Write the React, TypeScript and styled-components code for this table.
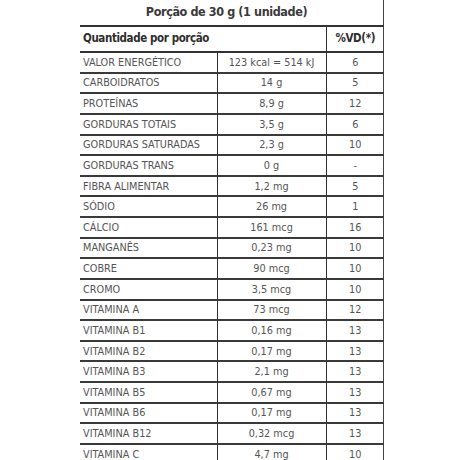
import styled, { createGlobalStyle } from "styled-components";

const Global = createGlobalStyle`
  html, body {
    margin: 0;
    padding: 0;
    background: #fff;
  }
  body {
    font-family: "DejaVu Sans Condensed", "DejaVu Sans", sans-serif;
    font-stretch: condensed;
  }
`;

const rows: [string, string, string][] = [
  ["VALOR ENERGÉTICO", "123 kcal = 514 kJ", "6"],
  ["CARBOIDRATOS", "14 g", "5"],
  ["PROTEÍNAS", "8,9 g", "12"],
  ["GORDURAS TOTAIS", "3,5 g", "6"],
  ["GORDURAS SATURADAS", "2,3 g", "10"],
  ["GORDURAS TRANS", "0 g", "-"],
  ["FIBRA ALIMENTAR", "1,2 mg", "5"],
  ["SÓDIO", "26 mg", "1"],
  ["CÁLCIO", "161 mcg", "16"],
  ["MANGANÊS", "0,23 mg", "10"],
  ["COBRE", "90 mcg", "10"],
  ["CROMO", "3,5 mcg", "10"],
  ["VITAMINA A", "73 mcg", "12"],
  ["VITAMINA B1", "0,16 mg", "13"],
  ["VITAMINA B2", "0,17 mg", "13"],
  ["VITAMINA B3", "2,1 mg", "13"],
  ["VITAMINA B5", "0,67 mg", "13"],
  ["VITAMINA B6", "0,17 mg", "13"],
  ["VITAMINA B12", "0,32 mcg", "13"],
  ["VITAMINA C", "4,7 mg", "10"],
];

export default function App() {
  return (
    <>
      <Global />
      <Page>
        <Panel>
          <Title>Porção de 30 g (1 unidade)</Title>
          <Table>
            <colgroup>
              <col style={{ width: 137 }} />
              <col style={{ width: 109 }} />
              <col style={{ width: 58 }} />
            </colgroup>
            <thead>
              <HeadRow>
                <HeadCell colSpan={2}>Quantidade por porção</HeadCell>
                <HeadCell $center>%VD(*)</HeadCell>
              </HeadRow>
            </thead>
            <tbody>
              {rows.map(([name, amount, vd]) => (
                <Row key={name}>
                  <Cell>{name}</Cell>
                  <Cell $center>{amount}</Cell>
                  <Cell $center>{vd}</Cell>
                </Row>
              ))}
            </tbody>
          </Table>
        </Panel>
      </Page>
    </>
  );
}

const Page = styled.div`
  width: 460px;
  height: 460px;
  overflow: hidden;
  padding-left: 80px;
  box-sizing: border-box;
`;

const Panel = styled.div`
  width: 304px;
  border-right: 1.5px solid #444;
  box-sizing: border-box;
`;

const Title = styled.div`
  height: 25px;
  line-height: 24px;
  text-align: center;
  font-size: 12.5px;
  font-weight: 700;
  letter-spacing: -0.4px;
  color: #3a3a3a;
  padding-right: 10px;
`;

const Table = styled.table`
  width: 304px;
  border-collapse: collapse;
  table-layout: fixed;
  border-top: 2px solid #333;
`;

const HeadRow = styled.tr`
  height: 26px;
  border-bottom: 2px solid #333;
`;

const HeadCell = styled.th<{ $center?: boolean }>`
  padding: 0 3px 2px;
  text-align: ${(p) => (p.$center ? "center" : "left")};
  font-size: 11.5px;
  font-weight: 700;
  letter-spacing: -0.4px;
  color: #2e2e2e;
  border-left: ${(p) => (p.$center ? "1.5px solid #333" : "none")};
  white-space: nowrap;
`;

const Row = styled.tr`
  height: 20.63px;
  border-bottom: 2px solid #3a3a3a;
`;

const Cell = styled.td<{ $center?: boolean }>`
  padding: 0 3px;
  font-size: 10.8px;
  color: #555;
  text-align: ${(p) => (p.$center ? "center" : "left")};
  border-left: ${(p) => (p.$center ? "1.5px solid #333" : "none")};
  white-space: nowrap;
  overflow: hidden;
`;
